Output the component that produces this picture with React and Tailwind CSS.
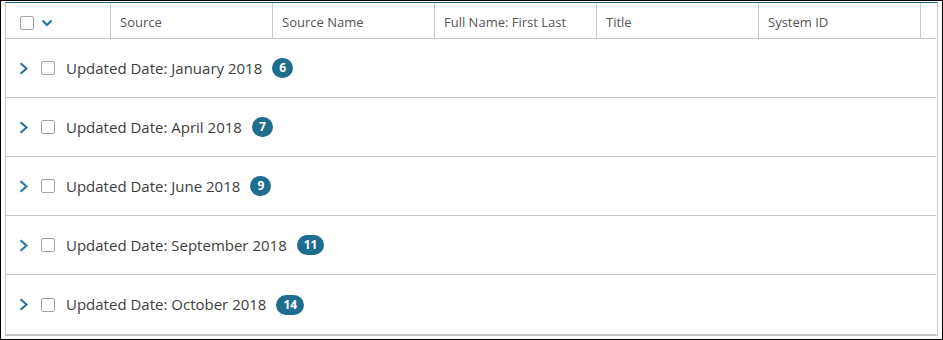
import { useState } from "react";

const columns = ["Source", "Source Name", "Full Name: First Last", "Title", "System ID"];

const groups = [
  { label: "Updated Date: January 2018", count: 6 },
  { label: "Updated Date: April 2018", count: 7 },
  { label: "Updated Date: June 2018", count: 9 },
  { label: "Updated Date: September 2018", count: 11 },
  { label: "Updated Date: October 2018", count: 14 },
];

const Checkbox = () => (
  <span className="block w-[14px] h-[14px] rounded-[2px] border border-[#a3a3a3] bg-white" />
);

const GroupRow = ({ label, count }) => (
  <div className="h-[59px] border-b border-[#c8c8c8] last:border-b-0 flex items-center pl-[12px]">
    <svg width="11" height="13" viewBox="0 0 11 13">
      <path d="M2.5 1.2 L8.5 6.5 L2.5 11.8" fill="none" stroke="#21729a" strokeWidth="2" />
    </svg>
    <span className="ml-[12px]">
      <Checkbox />
    </span>
    <span className="ml-[11px] text-[15px] text-[#3d3d3d]">{label}</span>
    <span className="ml-[10px] h-[20px] min-w-[21px] px-[7px] rounded-full bg-[#1f6d8e] text-white text-[12px] font-bold flex items-center justify-center">
      {count}
    </span>
  </div>
);

const App = () => {
  const [rows] = useState(groups);

  return (
    <div
      className="w-[943px] h-[340px] border border-black bg-white pt-[1px] px-[4px] pb-[3px]"
      style={{ fontFamily: '"Open Sans", "Noto Sans", sans-serif' }}
    >
      <div className="h-full border-t border-t-[#1c6480] border-x border-b border-[#c8c8c8] flex flex-col">
        <div className="flex-1 mr-[1px] mb-[1px] border-b border-[#c8c8c8] flex flex-col">
          {/* header */}
          <div className="h-[36px] flex border-b border-[#c8c8c8] text-[13px] text-[#555]">
            <div className="w-[105px] border-r border-[#c8c8c8] flex items-center pl-[14px] pt-[4px]">
              <Checkbox />
              <svg width="12" height="8" viewBox="0 0 12 8" className="ml-[7px] mt-[1px]">
                <path d="M1.5 1.5 L6 6 L10.5 1.5" fill="none" stroke="#21729a" strokeWidth="2" />
              </svg>
            </div>
            {columns.map((col) => (
              <div
                key={col}
                className="w-[162px] border-r border-[#c8c8c8] flex items-center pl-[9px] pt-[5px]"
              >
                {col}
              </div>
            ))}
            <div className="w-[15px]" />
          </div>

          {/* grouped rows */}
          <div className="flex flex-col">
            {rows.map((g) => (
              <GroupRow key={g.label} label={g.label} count={g.count} />
            ))}
          </div>
        </div>
      </div>
    </div>
  );
};

export default App;
